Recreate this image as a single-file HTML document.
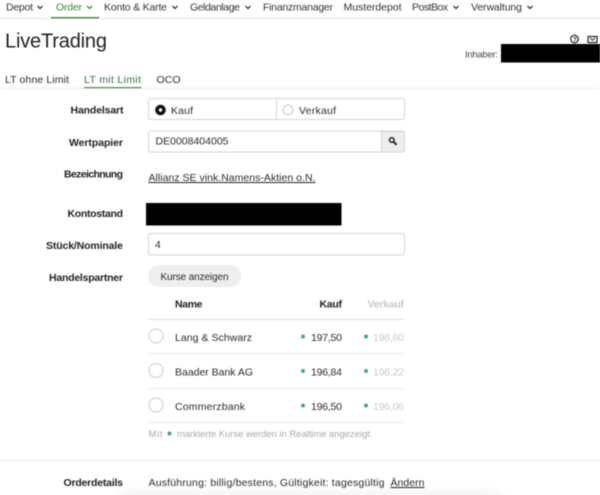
<!DOCTYPE html>
<html lang="de">
<head>
<meta charset="utf-8">
<title>LiveTrading</title>
<style>
html,body{margin:0;padding:0;background:#fff;width:600px;height:495px;overflow:hidden}
svg{display:block;filter:blur(.4px)}
text{font-family:"Liberation Sans",sans-serif;font-size:10.5px;fill:#2b2b2b}
.b{font-weight:bold;fill:#222}
.g{fill:#c9c9c9}
.n{fill:#a9a9a9;font-size:9.5px}
.nav{fill:#333}
.box{fill:#fff;stroke:#d5d5d5;stroke-width:1}
.line{stroke:#e9e9e9;stroke-width:1}
.chev{fill:none;stroke:#333;stroke-width:1.3}
.rad{fill:#fff;stroke:#c8c8c8;stroke-width:1}
.dot{fill:#4aa57c}
</style>
</head>
<body>
<svg width="600" height="495" viewBox="0 0 600 495" xmlns="http://www.w3.org/2000/svg">
<defs>
<filter id="soft" x="-20%" y="-200%" width="140%" height="500%"><feGaussianBlur stdDeviation="6"/></filter>
</defs>
<rect x="120" y="496" width="380" height="8" fill="#e2e2e2" filter="url(#soft)"/>

<!-- nav -->
<line class="line" x1="0" y1="18.5" x2="600" y2="18.5"/>
<text class="nav" x="6" y="10.5" textLength="27">Depot</text>
<path class="chev" d="M37.5 6l2.500 2.500L42.500 6"/>
<text x="56" y="10.500" textLength="26" style="fill:#3f8a3f">Order</text>
<path class="chev" style="stroke:#3f8a3f" d="M87 6l2.500 2.500L92 6"/>
<rect x="51" y="17" width="48" height="1.500" fill="#4c8f45"/>
<text class="nav" x="104" y="10.500" textLength="63">Konto &amp; Karte</text>
<path class="chev" d="M172.500 6l2.500 2.500L177.500 6"/>
<text class="nav" x="190" y="10.500" textLength="50">Geldanlage</text>
<path class="chev" d="M245.500 6l2.500 2.500L250.500 6"/>
<text class="nav" x="263" y="10.500" textLength="70">Finanzmanager</text>
<text class="nav" x="343.500" y="10.500" textLength="58">Musterdepot</text>
<text class="nav" x="412" y="10.500" textLength="36">PostBox</text>
<path class="chev" d="M453.500 6l2.500 2.500L458.500 6"/>
<text class="nav" x="471" y="10.500" textLength="51">Verwaltung</text>
<path class="chev" d="M527.500 6l2.500 2.500L532.500 6"/>

<!-- header -->
<text x="5" y="47.500" textLength="102" style="font-size:20px;fill:#222">LiveTrading</text>
<circle cx="574.500" cy="39" r="3.800" fill="none" stroke="#222" stroke-width="1.200"/>
<text x="572.900" y="41.500" style="font-size:6.500px;font-weight:bold;fill:#222">?</text>
<rect x="588" y="36.500" width="9" height="6" fill="none" stroke="#222" stroke-width="1.200"/>
<path d="M590 38l2.500 2.200L595 38" fill="none" stroke="#222" stroke-width="1"/>
<text x="465" y="57.500" textLength="33" style="font-size:9.500px;fill:#444">Inhaber:</text>
<rect x="501" y="44" width="99" height="18.500" fill="#000"/>

<!-- tabs -->
<text x="5" y="83" textLength="64">LT ohne Limit</text>
<text x="84" y="83" textLength="57" style="fill:#3d6f3d">LT mit Limit</text>
<text x="156.500" y="83" textLength="24">OCO</text>
<line class="line" x1="0" y1="88.500" x2="600" y2="88.500"/>
<rect x="84" y="87" width="57.500" height="1.200" fill="#4c8f45"/>

<!-- Handelsart -->
<text class="b" x="70.500" y="113.500" textLength="53">Handelsart</text>
<rect class="box" x="148.500" y="98.500" width="256" height="21" rx="2"/>
<line x1="276.500" y1="99" x2="276.500" y2="119" stroke="#d5d5d5"/>
<circle cx="160.500" cy="110" r="3.500" fill="#fff" stroke="#111" stroke-width="3.600"/>
<text x="171" y="114" textLength="22">Kauf</text>
<circle class="rad" cx="288" cy="110" r="5"/>
<text x="299" y="114" textLength="37">Verkauf</text>

<!-- Wertpapier -->
<text class="b" x="69" y="146" textLength="54">Wertpapier</text>
<rect class="box" x="148.500" y="131" width="256" height="21" rx="2"/>
<path d="M381.500 131.500H403a1.500 1.500 0 0 1 1.500 1.500v17.500a1.500 1.500 0 0 1-1.500 1.500H381.500z" fill="#eeeeee" stroke="#d5d5d5"/>
<circle cx="391.800" cy="140" r="2.300" fill="none" stroke="#222" stroke-width="1.500"/>
<path d="M393.600 141.800l3 3" stroke="#222" stroke-width="2" fill="none"/>
<text x="155.500" y="144.500" textLength="73">DE0008404005</text>

<!-- Bezeichnung -->
<text class="b" x="64" y="177.500" textLength="59">Bezeichnung</text>
<text x="148.500" y="181" textLength="167" text-decoration="underline">Allianz SE vink.Namens-Aktien o.N.</text>

<!-- Kontostand -->
<text class="b" x="67.500" y="217" textLength="55.500">Kontostand</text>
<rect x="146" y="203" width="195.500" height="22.500" fill="#000"/>

<!-- Stueck -->
<text class="b" x="46" y="249" textLength="77">Stück/Nominale</text>
<rect class="box" x="148.500" y="233.500" width="256" height="21.500" rx="2"/>
<text x="155" y="248">4</text>

<!-- Handelspartner -->
<text class="b" x="49" y="281" textLength="74">Handelspartner</text>
<rect x="148" y="265" width="93" height="22" rx="11" fill="#eeeeee"/>
<text x="160.500" y="280" textLength="68" style="font-size:10px">Kurse anzeigen</text>

<!-- table -->
<text class="b" x="175" y="307.500" textLength="27.500">Name</text>
<text class="b" x="319.500" y="307.500" textLength="22.500">Kauf</text>
<text class="b g" x="367.500" y="307.500" textLength="36.500">Verkauf</text>
<line class="line" x1="148" y1="319.500" x2="404" y2="319.500" style="stroke:#ddd"/>

<circle class="rad" cx="156" cy="336" r="7"/>
<text x="175" y="341" textLength="77">Lang &amp; Schwarz</text>
<circle class="dot" cx="303" cy="336.500" r="2"/>
<text x="311" y="341" textLength="31">197,50</text>
<circle class="dot" cx="366" cy="336.500" r="2"/>
<text class="g" x="373" y="341" textLength="31">196,60</text>
<line class="line" x1="148" y1="353.500" x2="404" y2="353.500"/>

<circle class="rad" cx="156" cy="370.500" r="7"/>
<text x="175" y="375.500" textLength="78">Baader Bank AG</text>
<circle class="dot" cx="303" cy="371" r="2"/>
<text x="311" y="375.500" textLength="31">196,84</text>
<circle class="dot" cx="366" cy="371" r="2"/>
<text class="g" x="373" y="375.500" textLength="31">196,22</text>
<line class="line" x1="148" y1="388.500" x2="404" y2="388.500"/>

<circle class="rad" cx="156" cy="405" r="7"/>
<text x="175" y="410" textLength="70">Commerzbank</text>
<circle class="dot" cx="303" cy="405.500" r="2"/>
<text x="311" y="410" textLength="31">196,50</text>
<circle class="dot" cx="366" cy="405.500" r="2"/>
<text class="g" x="373" y="410" textLength="31">196,06</text>
<line class="line" x1="148" y1="422.500" x2="404" y2="422.500"/>

<text class="n" x="148.500" y="437" textLength="14">Mit</text>
<circle class="dot" cx="169.500" cy="433.500" r="2"/>
<text class="n" x="177" y="437" textLength="195.500">markierte Kurse werden in Realtime angezeigt.</text>

<!-- Orderdetails -->
<line class="line" x1="0" y1="460.500" x2="600" y2="460.500"/>
<text class="b" x="63.500" y="486" textLength="59.500">Orderdetails</text>
<text x="148.500" y="486" textLength="236">Ausführung: billig/bestens, Gültigkeit: tagesgültig</text>
<text x="390.500" y="486" textLength="34" text-decoration="underline">Ändern</text>
</svg>
</body>
</html>
